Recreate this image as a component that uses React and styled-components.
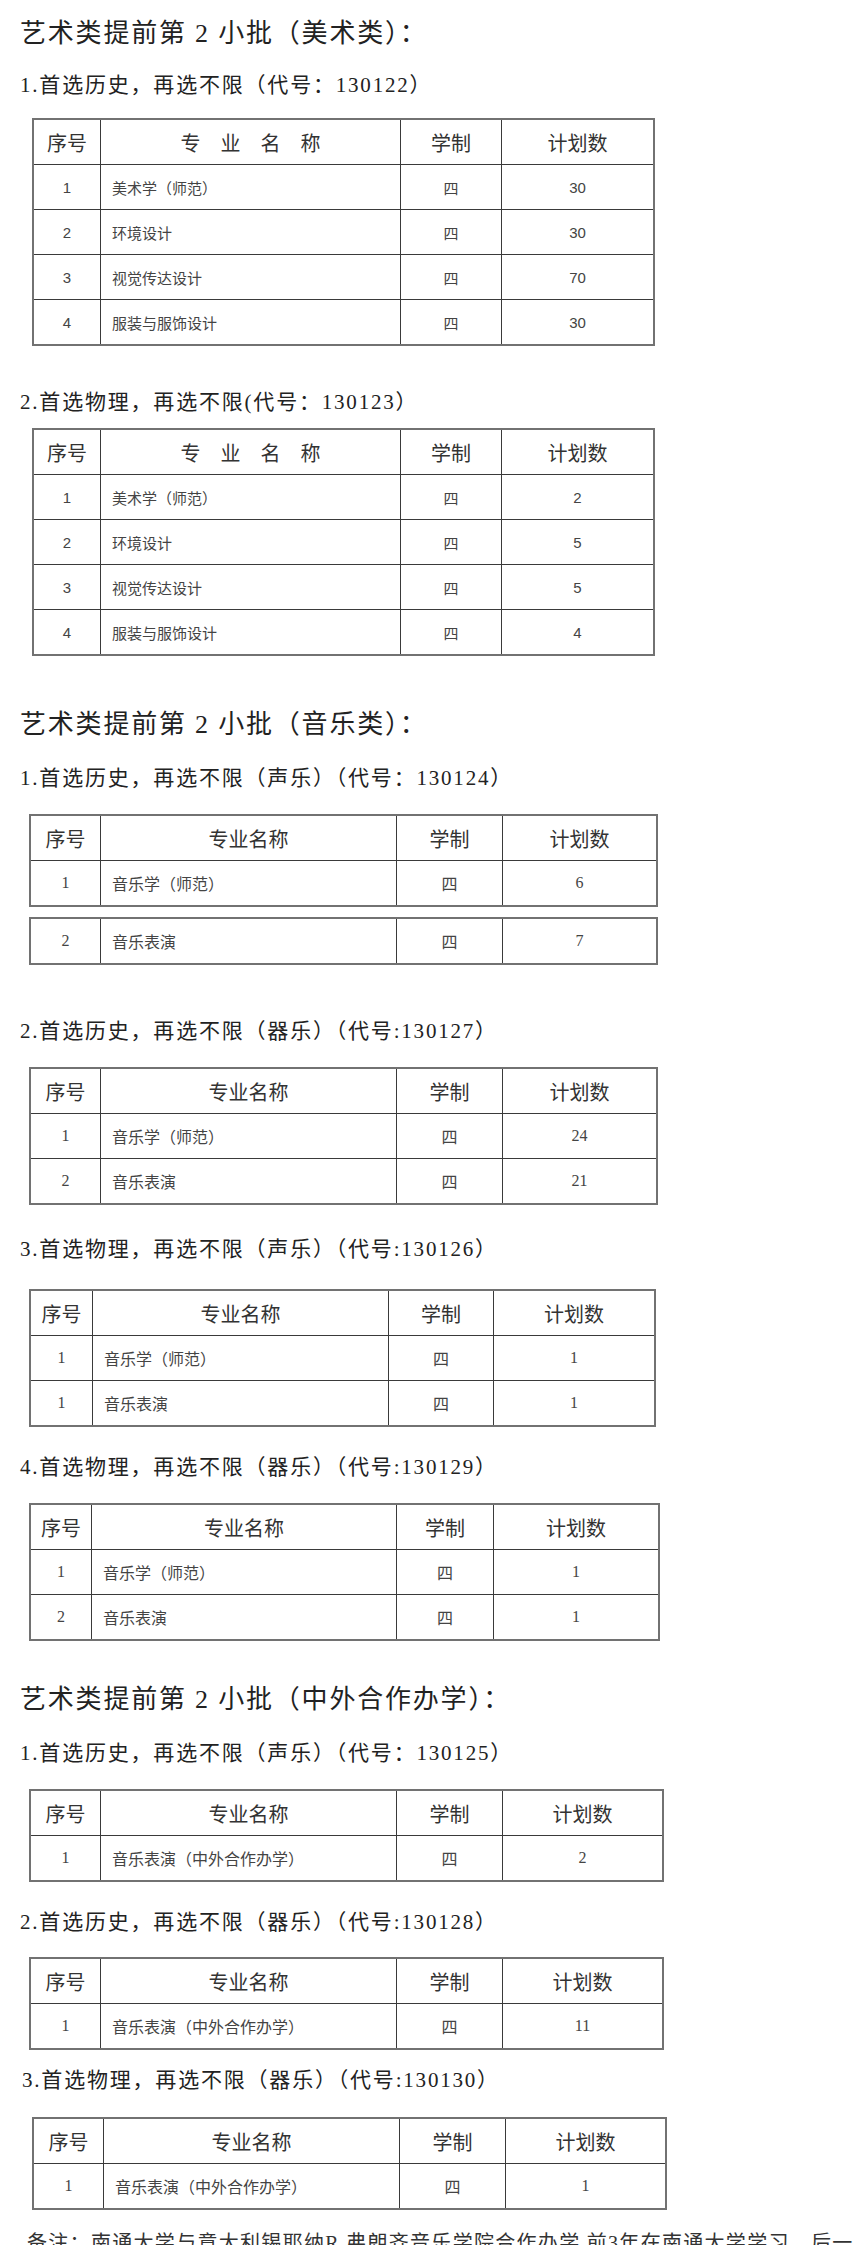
import styled, { createGlobalStyle } from "styled-components";

const GlobalStyle = createGlobalStyle`
  html, body {
    margin: 0;
    padding: 0;
    background: #ffffff;
  }
  body {
    font-family: "Liberation Serif", "Noto Sans CJK SC", serif;
    color: #222222;
  }
`;

const fineArtRows = ["美术学（师范）", "环境设计", "视觉传达设计", "服装与服饰设计"];

const sections = [
  {
    title: "艺术类提前第 2 小批（美术类）：",
    titleTop: 0,
    groups: [
      {
        label: "1.首选历史，再选不限（代号：130122）",
        mt: 15,
        gap: 17,
        spaced: true,
        sans: true,
        left: 32,
        width: 623,
        cols: [66, 299, 100],
        rows: [
          ["1", fineArtRows[0], "30"],
          ["2", fineArtRows[1], "30"],
          ["3", fineArtRows[2], "70"],
          ["4", fineArtRows[3], "30"],
        ],
      },
      {
        label: "2.首选物理，再选不限(代号：130123）",
        mt: 40,
        gap: 10,
        spaced: true,
        sans: true,
        left: 32,
        width: 623,
        cols: [66, 299, 100],
        rows: [
          ["1", fineArtRows[0], "2"],
          ["2", fineArtRows[1], "5"],
          ["3", fineArtRows[2], "5"],
          ["4", fineArtRows[3], "4"],
        ],
      },
    ],
  },
  {
    title: "艺术类提前第 2 小批（音乐类）：",
    titleTop: 49,
    groups: [
      {
        label: "1.首选历史，再选不限（声乐）（代号：130124）",
        mt: 17,
        gap: 20,
        left: 29,
        width: 629,
        cols: [69, 295, 105],
        rows: [["1", "音乐学（师范）", "6"]],
        extra: [["2", "音乐表演", "7"]],
      },
      {
        label: "2.首选历史，再选不限（器乐）（代号:130127）",
        mt: 50,
        gap: 20,
        left: 29,
        width: 629,
        cols: [69, 295, 105],
        rows: [
          ["1", "音乐学（师范）", "24"],
          ["2", "音乐表演", "21"],
        ],
      },
      {
        label: "3.首选物理，再选不限（声乐）（代号:130126）",
        mt: 28,
        gap: 24,
        left: 29,
        width: 627,
        cols: [61, 295, 104],
        rows: [
          ["1", "音乐学（师范）", "1"],
          ["1", "音乐表演", "1"],
        ],
      },
      {
        label: "4.首选物理，再选不限（器乐）（代号:130129）",
        mt: 24,
        gap: 20,
        left: 29,
        width: 631,
        cols: [60, 304, 96],
        rows: [
          ["1", "音乐学（师范）", "1"],
          ["2", "音乐表演", "1"],
        ],
      },
    ],
  },
  {
    title: "艺术类提前第 2 小批（中外合作办学）：",
    titleTop: 39,
    groups: [
      {
        label: "1.首选历史，再选不限（声乐）（代号：130125）",
        mt: 17,
        gap: 20,
        left: 29,
        width: 635,
        cols: [69, 295, 105],
        rows: [["1", "音乐表演（中外合作办学）", "2"]],
      },
      {
        label: "2.首选历史，再选不限（器乐）（代号:130128）",
        mt: 24,
        gap: 19,
        left: 29,
        width: 635,
        cols: [69, 295, 105],
        rows: [["1", "音乐表演（中外合作办学）", "11"]],
      },
      {
        label: "3.首选物理，再选不限（器乐）（代号:130130）",
        mt: 14,
        gap: 21,
        indent: 2,
        left: 32,
        width: 635,
        cols: [69, 295, 105],
        rows: [["1", "音乐表演（中外合作办学）", "1"]],
      },
    ],
  },
];

export default function App() {
  return (
    <>
      <GlobalStyle />
      <Page>
        {sections.map((section) => (
          <Section key={section.title}>
            <Title $mt={section.titleTop}>{section.title}</Title>
            {section.groups.map((group) => (
              <Group key={group.label}>
                <SubTitle $mt={group.mt} $indent={group.indent || 0}>
                  {group.label}
                </SubTitle>
                <PlanTable group={group} />
              </Group>
            ))}
          </Section>
        ))}
        <Note>
          备注：南通大学与意大利锡耶纳R.弗朗齐音乐学院合作办学,前3年在南通大学学习，后一
        </Note>
      </Page>
    </>
  );
}

function PlanTable({ group }) {
  const { left, width, cols, rows, extra, gap, spaced, sans } = group;
  const template = `${cols[0]}px ${cols[1]}px ${cols[2]}px 1fr`;

  return (
    <>
      <Grid $mt={gap} $left={left} $width={width} $cols={template}>
        <HeadCell>序号</HeadCell>
        <HeadCell $spaced={spaced}>专业名称</HeadCell>
        <HeadCell>学制</HeadCell>
        <HeadCell>计划数</HeadCell>
        {rows.map((row, i) => (
          <BodyRow key={i} row={row} sans={sans} />
        ))}
      </Grid>
      {extra && (
        <Grid $mt={10} $left={left} $width={width} $cols={template}>
          {extra.map((row, i) => (
            <BodyRow key={i} row={row} sans={sans} />
          ))}
        </Grid>
      )}
    </>
  );
}

function BodyRow({ row, sans }) {
  return (
    <>
      <Cell $sans={sans}>{row[0]}</Cell>
      <NameCell $sans={sans}>{row[1]}</NameCell>
      <Cell $sans={sans}>四</Cell>
      <Cell $sans={sans}>{row[2]}</Cell>
    </>
  );
}

const Page = styled.div`
  display: flex;
  flex-direction: column;
  align-items: flex-start;
  width: 854px;
  padding: 14px 0 0 20px;
  box-sizing: border-box;
  overflow: hidden;
`;

const Section = styled.div`
  display: flex;
  flex-direction: column;
  align-items: flex-start;
`;

const Group = styled.div`
  display: flex;
  flex-direction: column;
  align-items: flex-start;
`;

const Title = styled.div`
  margin-top: ${(p) => p.$mt}px;
  font-size: 26px;
  line-height: 40px;
  letter-spacing: 1.8px;
  color: #222222;
  white-space: nowrap;
`;

const SubTitle = styled.div`
  margin-top: ${(p) => p.$mt}px;
  margin-left: ${(p) => p.$indent}px;
  font-size: 21px;
  line-height: 32px;
  letter-spacing: 1.8px;
  color: #222222;
  white-space: nowrap;
`;

const Grid = styled.div`
  display: grid;
  grid-template-columns: ${(p) => p.$cols};
  grid-auto-rows: 44px;
  gap: 1px;
  margin-top: ${(p) => p.$mt}px;
  margin-left: ${(p) => p.$left - 20}px;
  width: ${(p) => p.$width}px;
  box-sizing: border-box;
  background: #3a3a3a;
  border: 2px solid #727272;
`;

const HeadCell = styled.div`
  display: flex;
  align-items: center;
  justify-content: center;
  background: #ffffff;
  font-family: "Noto Sans CJK SC", sans-serif;
  font-size: 20px;
  color: #333333;
  letter-spacing: ${(p) => (p.$spaced ? "20px" : "0")};
  padding-left: ${(p) => (p.$spaced ? "20px" : "0")};
`;

const Cell = styled.div`
  display: flex;
  align-items: center;
  justify-content: center;
  background: #ffffff;
  font-family: ${(p) =>
    p.$sans
      ? `"Liberation Sans", "Noto Sans CJK SC", sans-serif`
      : `"Liberation Serif", "Noto Sans CJK SC", serif`};
  font-size: ${(p) => (p.$sans ? "15px" : "16px")};
  color: #444444;
`;

const NameCell = styled(Cell)`
  justify-content: flex-start;
  padding-left: 11px;
`;

const Note = styled.div`
  margin-top: 18px;
  margin-left: 7px;
  font-size: 20px;
  line-height: 30px;
  letter-spacing: 1.3px;
  color: #333333;
  white-space: nowrap;
`;
